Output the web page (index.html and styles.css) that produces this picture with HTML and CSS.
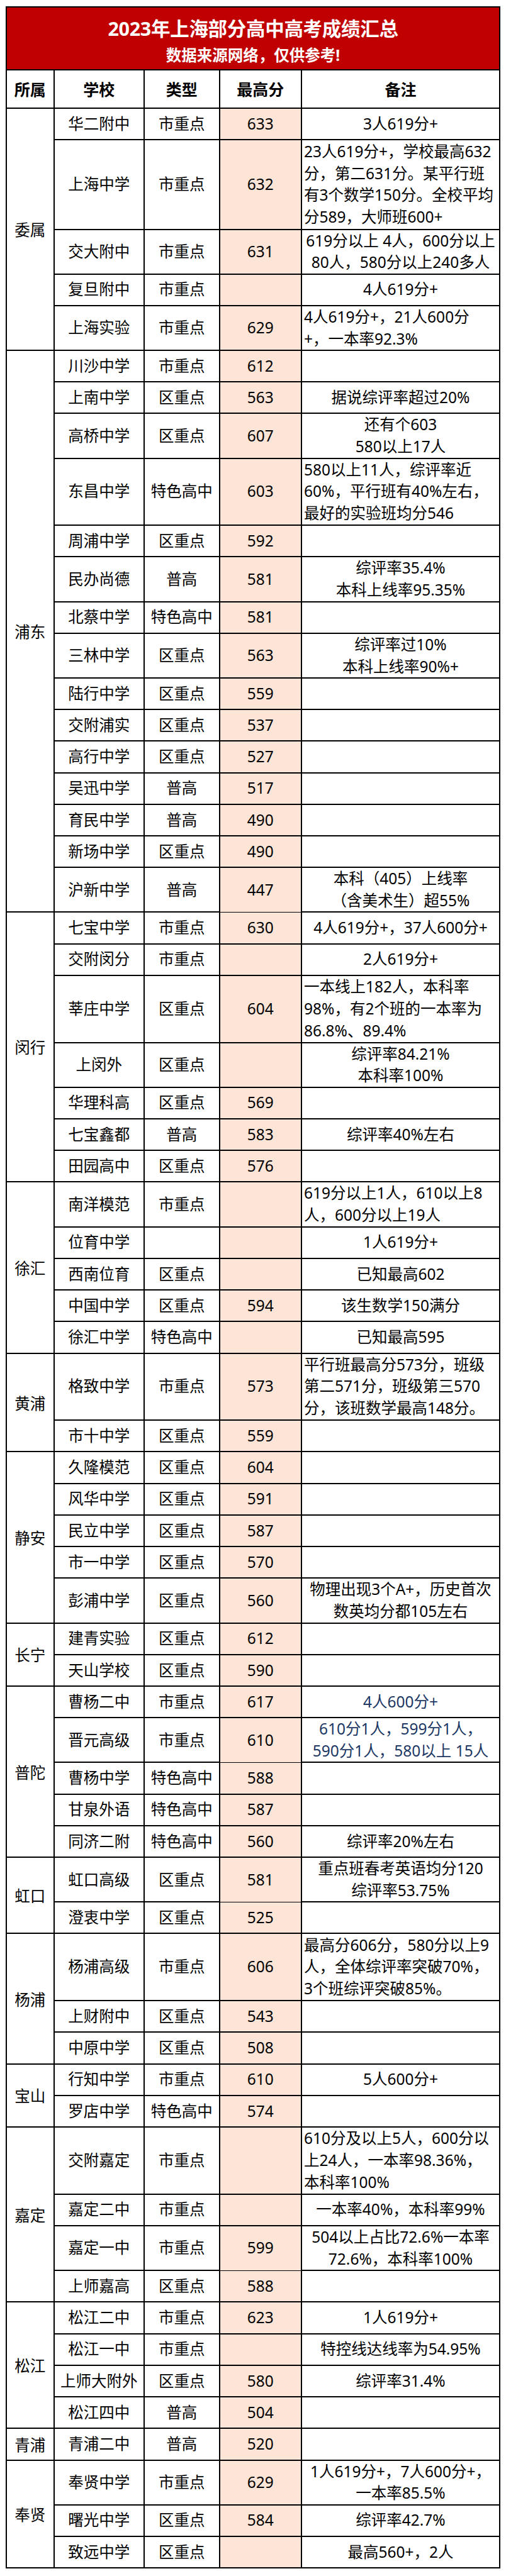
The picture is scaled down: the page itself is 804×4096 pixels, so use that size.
FILE: index.html
```html
<!DOCTYPE html>
<html lang="zh-CN">
<head>
<meta charset="utf-8">
<title>2023年上海部分高中高考成绩汇总</title>
<link rel="stylesheet" href="styles.css">
</head>
<body>
<div class="sheet">
  <header class="title">
    <h1>2023年上海部分高中高考成绩汇总</h1>
    <p>数据来源网络，仅供参考!</p>
  </header>
  <div class="head">
    <div class="hc first">所属</div>
    <div class="hc">学校</div>
    <div class="hc">类型</div>
    <div class="hc">最高分</div>
    <div class="hc">备注</div>
  </div>

  <section class="district">
    <div class="dname">委属</div>
    <div class="rows">
      <div class="row h1"><div class="c name">华二附中</div><div class="c type">市重点</div><div class="c score">633</div><div class="c note"><span>3人619分+</span></div></div>
      <div class="row h4"><div class="c name">上海中学</div><div class="c type">市重点</div><div class="c score">632</div><div class="c note left"><span>23人619分+，学校最高632<br>分，第二631分。某平行班<br>有3个数学150分。全校平均<br>分589，大师班600+</span></div></div>
      <div class="row h2"><div class="c name">交大附中</div><div class="c type">市重点</div><div class="c score">631</div><div class="c note"><span>619分以上 4人，600分以上<br>80人，580分以上240多人</span></div></div>
      <div class="row h1"><div class="c name">复旦附中</div><div class="c type">市重点</div><div class="c score"></div><div class="c note"><span>4人619分+</span></div></div>
      <div class="row h2"><div class="c name">上海实验</div><div class="c type">市重点</div><div class="c score">629</div><div class="c note left"><span>4人619分+，21人600分<br>+，一本率92.3%</span></div></div>
    </div>
  </section>

  <section class="district">
    <div class="dname">浦东</div>
    <div class="rows">
      <div class="row h1"><div class="c name">川沙中学</div><div class="c type">市重点</div><div class="c score">612</div><div class="c note"></div></div>
      <div class="row h1"><div class="c name">上南中学</div><div class="c type">区重点</div><div class="c score">563</div><div class="c note"><span>据说综评率超过20%</span></div></div>
      <div class="row h2"><div class="c name">高桥中学</div><div class="c type">区重点</div><div class="c score">607</div><div class="c note"><span>还有个603<br>580以上17人</span></div></div>
      <div class="row h3"><div class="c name">东昌中学</div><div class="c type">特色高中</div><div class="c score">603</div><div class="c note left"><span>580以上11人，综评率近<br>60%，平行班有40%左右，<br>最好的实验班均分546</span></div></div>
      <div class="row h1"><div class="c name">周浦中学</div><div class="c type">区重点</div><div class="c score">592</div><div class="c note"></div></div>
      <div class="row h2"><div class="c name">民办尚德</div><div class="c type">普高</div><div class="c score">581</div><div class="c note"><span>综评率35.4%<br>本科上线率95.35%</span></div></div>
      <div class="row h1"><div class="c name">北蔡中学</div><div class="c type">特色高中</div><div class="c score">581</div><div class="c note"></div></div>
      <div class="row h2"><div class="c name">三林中学</div><div class="c type">区重点</div><div class="c score">563</div><div class="c note"><span>综评率过10%<br>本科上线率90%+</span></div></div>
      <div class="row h1"><div class="c name">陆行中学</div><div class="c type">区重点</div><div class="c score">559</div><div class="c note"></div></div>
      <div class="row h1"><div class="c name">交附浦实</div><div class="c type">区重点</div><div class="c score">537</div><div class="c note"></div></div>
      <div class="row h1"><div class="c name">高行中学</div><div class="c type">区重点</div><div class="c score">527</div><div class="c note"></div></div>
      <div class="row h1"><div class="c name">吴迅中学</div><div class="c type">普高</div><div class="c score">517</div><div class="c note"></div></div>
      <div class="row h1"><div class="c name">育民中学</div><div class="c type">普高</div><div class="c score">490</div><div class="c note"></div></div>
      <div class="row h1"><div class="c name">新场中学</div><div class="c type">区重点</div><div class="c score">490</div><div class="c note"></div></div>
      <div class="row h2"><div class="c name">沪新中学</div><div class="c type">普高</div><div class="c score">447</div><div class="c note"><span>本科（405）上线率<br>（含美术生）超55%</span></div></div>
    </div>
  </section>

  <section class="district">
    <div class="dname">闵行</div>
    <div class="rows">
      <div class="row h1"><div class="c name">七宝中学</div><div class="c type">市重点</div><div class="c score">630</div><div class="c note"><span>4人619分+，37人600分+</span></div></div>
      <div class="row h1"><div class="c name">交附闵分</div><div class="c type">市重点</div><div class="c score"></div><div class="c note"><span>2人619分+</span></div></div>
      <div class="row h3"><div class="c name">莘庄中学</div><div class="c type">区重点</div><div class="c score">604</div><div class="c note left"><span>一本线上182人，本科率<br>98%，有2个班的一本率为<br>86.8%、89.4%</span></div></div>
      <div class="row h2"><div class="c name">上闵外</div><div class="c type">区重点</div><div class="c score"></div><div class="c note"><span>综评率84.21%<br>本科率100%</span></div></div>
      <div class="row h1"><div class="c name">华理科高</div><div class="c type">区重点</div><div class="c score">569</div><div class="c note"></div></div>
      <div class="row h1"><div class="c name">七宝鑫都</div><div class="c type">普高</div><div class="c score">583</div><div class="c note"><span>综评率40%左右</span></div></div>
      <div class="row h1"><div class="c name">田园高中</div><div class="c type">区重点</div><div class="c score">576</div><div class="c note"></div></div>
    </div>
  </section>

  <section class="district">
    <div class="dname">徐汇</div>
    <div class="rows">
      <div class="row h2"><div class="c name">南洋模范</div><div class="c type">市重点</div><div class="c score"></div><div class="c note left"><span>619分以上1人，610以上8<br>人，600分以上19人</span></div></div>
      <div class="row h1"><div class="c name">位育中学</div><div class="c type"></div><div class="c score"></div><div class="c note"><span>1人619分+</span></div></div>
      <div class="row h1"><div class="c name">西南位育</div><div class="c type">区重点</div><div class="c score"></div><div class="c note"><span>已知最高602</span></div></div>
      <div class="row h1"><div class="c name">中国中学</div><div class="c type">区重点</div><div class="c score">594</div><div class="c note"><span>该生数学150满分</span></div></div>
      <div class="row h1"><div class="c name">徐汇中学</div><div class="c type">特色高中</div><div class="c score"></div><div class="c note"><span>已知最高595</span></div></div>
    </div>
  </section>

  <section class="district">
    <div class="dname">黄浦</div>
    <div class="rows">
      <div class="row h3"><div class="c name">格致中学</div><div class="c type">市重点</div><div class="c score">573</div><div class="c note left"><span>平行班最高分573分，班级<br>第二571分，班级第三570<br>分，该班数学最高148分。</span></div></div>
      <div class="row h1"><div class="c name">市十中学</div><div class="c type">区重点</div><div class="c score">559</div><div class="c note"></div></div>
    </div>
  </section>

  <section class="district">
    <div class="dname">静安</div>
    <div class="rows">
      <div class="row h1"><div class="c name">久隆模范</div><div class="c type">区重点</div><div class="c score">604</div><div class="c note"></div></div>
      <div class="row h1"><div class="c name">风华中学</div><div class="c type">区重点</div><div class="c score">591</div><div class="c note"></div></div>
      <div class="row h1"><div class="c name">民立中学</div><div class="c type">区重点</div><div class="c score">587</div><div class="c note"></div></div>
      <div class="row h1"><div class="c name">市一中学</div><div class="c type">区重点</div><div class="c score">570</div><div class="c note"></div></div>
      <div class="row h2"><div class="c name">彭浦中学</div><div class="c type">区重点</div><div class="c score">560</div><div class="c note"><span>物理出现3个A+，历史首次<br>数英均分都105左右</span></div></div>
    </div>
  </section>

  <section class="district">
    <div class="dname">长宁</div>
    <div class="rows">
      <div class="row h1"><div class="c name">建青实验</div><div class="c type">区重点</div><div class="c score">612</div><div class="c note"></div></div>
      <div class="row h1"><div class="c name">天山学校</div><div class="c type">区重点</div><div class="c score">590</div><div class="c note"></div></div>
    </div>
  </section>

  <section class="district">
    <div class="dname">普陀</div>
    <div class="rows">
      <div class="row h1"><div class="c name">曹杨二中</div><div class="c type">市重点</div><div class="c score">617</div><div class="c note blue"><span>4人600分+</span></div></div>
      <div class="row h2"><div class="c name">晋元高级</div><div class="c type">市重点</div><div class="c score">610</div><div class="c note blue"><span>610分1人，599分1人，<br>590分1人，580以上 15人</span></div></div>
      <div class="row h1"><div class="c name">曹杨中学</div><div class="c type">特色高中</div><div class="c score">588</div><div class="c note"></div></div>
      <div class="row h1"><div class="c name">甘泉外语</div><div class="c type">特色高中</div><div class="c score">587</div><div class="c note"></div></div>
      <div class="row h1"><div class="c name">同济二附</div><div class="c type">特色高中</div><div class="c score">560</div><div class="c note"><span>综评率20%左右</span></div></div>
    </div>
  </section>

  <section class="district">
    <div class="dname">虹口</div>
    <div class="rows">
      <div class="row h2"><div class="c name">虹口高级</div><div class="c type">区重点</div><div class="c score">581</div><div class="c note"><span>重点班春考英语均分120<br>综评率53.75%</span></div></div>
      <div class="row h1"><div class="c name">澄衷中学</div><div class="c type">区重点</div><div class="c score">525</div><div class="c note"></div></div>
    </div>
  </section>

  <section class="district">
    <div class="dname">杨浦</div>
    <div class="rows">
      <div class="row h3"><div class="c name">杨浦高级</div><div class="c type">市重点</div><div class="c score">606</div><div class="c note left"><span>最高分606分，580分以上9<br>人，全体综评率突破70%，<br>3个班综评突破85%。</span></div></div>
      <div class="row h1"><div class="c name">上财附中</div><div class="c type">区重点</div><div class="c score">543</div><div class="c note"></div></div>
      <div class="row h1"><div class="c name">中原中学</div><div class="c type">区重点</div><div class="c score">508</div><div class="c note"></div></div>
    </div>
  </section>

  <section class="district">
    <div class="dname">宝山</div>
    <div class="rows">
      <div class="row h1"><div class="c name">行知中学</div><div class="c type">市重点</div><div class="c score">610</div><div class="c note"><span>5人600分+</span></div></div>
      <div class="row h1"><div class="c name">罗店中学</div><div class="c type">特色高中</div><div class="c score">574</div><div class="c note"></div></div>
    </div>
  </section>

  <section class="district">
    <div class="dname">嘉定</div>
    <div class="rows">
      <div class="row h3"><div class="c name">交附嘉定</div><div class="c type">市重点</div><div class="c score"></div><div class="c note left"><span>610分及以上5人，600分以<br>上24人，一本率98.36%，<br>本科率100%</span></div></div>
      <div class="row h1"><div class="c name">嘉定二中</div><div class="c type">市重点</div><div class="c score"></div><div class="c note"><span>一本率40%，本科率99%</span></div></div>
      <div class="row h2"><div class="c name">嘉定一中</div><div class="c type">市重点</div><div class="c score">599</div><div class="c note"><span>504以上占比72.6%一本率<br>72.6%，本科率100%</span></div></div>
      <div class="row h1"><div class="c name">上师嘉高</div><div class="c type">区重点</div><div class="c score">588</div><div class="c note"></div></div>
    </div>
  </section>

  <section class="district">
    <div class="dname">松江</div>
    <div class="rows">
      <div class="row h1"><div class="c name">松江二中</div><div class="c type">市重点</div><div class="c score">623</div><div class="c note"><span>1人619分+</span></div></div>
      <div class="row h1"><div class="c name">松江一中</div><div class="c type">市重点</div><div class="c score"></div><div class="c note"><span>特控线达线率为54.95%</span></div></div>
      <div class="row h1"><div class="c name">上师大附外</div><div class="c type">区重点</div><div class="c score">580</div><div class="c note"><span>综评率31.4%</span></div></div>
      <div class="row h1"><div class="c name">松江四中</div><div class="c type">普高</div><div class="c score">504</div><div class="c note"></div></div>
    </div>
  </section>

  <section class="district">
    <div class="dname">青浦</div>
    <div class="rows">
      <div class="row h1"><div class="c name">青浦二中</div><div class="c type">普高</div><div class="c score">520</div><div class="c note"></div></div>
    </div>
  </section>

  <section class="district">
    <div class="dname">奉贤</div>
    <div class="rows">
      <div class="row h2"><div class="c name">奉贤中学</div><div class="c type">市重点</div><div class="c score">629</div><div class="c note"><span>1人619分+，7人600分+，<br>一本率85.5%</span></div></div>
      <div class="row h1"><div class="c name">曙光中学</div><div class="c type">区重点</div><div class="c score">584</div><div class="c note"><span>综评率42.7%</span></div></div>
      <div class="row h1"><div class="c name">致远中学</div><div class="c type">区重点</div><div class="c score"></div><div class="c note"><span>最高560+，2人</span></div></div>
    </div>
  </section>
</div>
</body>
</html>
```

FILE: styles.css
```css
* { box-sizing: border-box; }

body {
  margin: 0;
  background: #ffffff;
  color: #000000;
  font-family: "Noto Sans", "Noto Sans CJK SC", sans-serif;
}

.sheet {
  margin: 10px 0 0 9px;
  width: 786px;
  border-top: 2px solid #000;
  border-left: 2px solid #000;
  border-right: 2px solid #000;
}

.title {
  height: 99.8px;
  background: #c00000;
  color: #ffffff;
  text-align: center;
  border-bottom: 2px solid #000;
  padding-top: 13px;
}

.title h1 {
  margin: 0;
  font-size: 30.5px;
  line-height: 40px;
  font-weight: 700;
  letter-spacing: -0.3px;
}

.title p {
  margin: 8px 0 0;
  font-size: 24.5px;
  line-height: 30px;
  font-weight: 700;
}

.head {
  display: grid;
  grid-template-columns: 73.5px 143.5px 119.5px 130.5px 1fr;
  height: 61.3px;
  border-bottom: 2px solid #000;
}

.hc {
  display: flex;
  align-items: center;
  justify-content: center;
  font-size: 25px;
  font-weight: 700;
  border-left: 2px solid #000;
}

.hc.first { border-left: none; }

.district {
  display: flex;
  border-bottom: 2px solid #000;
}

.dname {
  width: 73.5px;
  flex: none;
  display: flex;
  align-items: center;
  justify-content: center;
  font-size: 24.5px;
}

.rows {
  flex: 1;
  min-width: 0;
  border-left: 2px solid #000;
}

.row {
  display: grid;
  grid-template-columns: 141.5px 119.5px 130.5px 1fr;
  height: var(--h);
  border-bottom: 2px solid #000;
}

.row:last-child {
  border-bottom: none;
  height: calc(var(--h) - 2px);
}

.h1 { --h: 50.25px; }
.h2 { --h: 71.1px; }
.h3 { --h: 106.65px; }
.h4 { --h: 142.2px; }

.c {
  display: flex;
  align-items: center;
  justify-content: center;
  text-align: center;
  white-space: nowrap;
  font-size: 24.5px;
  line-height: 34.8px;
  border-left: 2px solid #000;
  min-width: 0;
}

.c.name { border-left: none; }

.c.score { background: #fce4d6; }

.c.note.left {
  justify-content: flex-start;
  text-align: left;
  padding-left: 3px;
}

.c.note.blue { color: #203864; }
```
